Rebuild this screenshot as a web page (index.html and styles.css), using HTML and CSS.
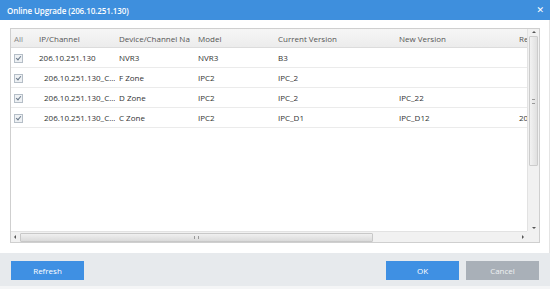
FILE: index.html
```html
<!DOCTYPE html>
<html>
<head>
<meta charset="utf-8">
<link rel="stylesheet" href="styles.css">
</head>
<body>
<div class="dialog">
  <div class="titlebar">
    <span class="title">Online Upgrade (206.10.251.130)</span>
    <span class="close">&#x2715;</span>
  </div>
  <div class="content">
    <div class="grid">
      <div class="viewport">
        <table class="list">
          <colgroup>
            <col style="width:24px"><col style="width:80px"><col style="width:79px"><col style="width:80px"><col style="width:121px"><col style="width:120px"><col style="width:60px">
          </colgroup>
          <thead>
            <tr><th>All</th><th>IP/Channel</th><th>Device/Channel Na</th><th>Model</th><th>Current Version</th><th>New Version</th><th>Re</th></tr>
          </thead>
          <tbody>
            <tr><td><span class="cb"></span></td><td>206.10.251.130</td><td>NVR3</td><td>NVR3</td><td>B3</td><td></td><td></td></tr>
            <tr><td><span class="cb"></span></td><td class="ind">206.10.251.130_C...</td><td>F Zone</td><td>IPC2</td><td>IPC_2</td><td></td><td></td></tr>
            <tr><td><span class="cb"></span></td><td class="ind">206.10.251.130_C...</td><td>D Zone</td><td>IPC2</td><td>IPC_2</td><td>IPC_22</td><td></td></tr>
            <tr><td><span class="cb"></span></td><td class="ind">206.10.251.130_C...</td><td>C Zone</td><td>IPC2</td><td>IPC_D1</td><td>IPC_D12</td><td>201</td></tr>
          </tbody>
        </table>
      </div>
      <div class="vscroll">
        <span class="arr up"></span>
        <div class="vthumb"><span class="grip-v"></span></div>
        <span class="arr down"></span>
      </div>
      <div class="hscroll">
        <span class="arr left"></span>
        <div class="hthumb"><span class="grip-h"></span></div>
        <span class="arr right"></span>
      </div>
      <div class="corner"></div>
    </div>
  </div>
  <div class="footer">
    <button class="btn primary">Refresh</button>
    <div class="spacer"></div>
    <button class="btn primary">OK</button>
    <button class="btn gray">Cancel</button>
  </div>
</div>
</body>
</html>
```

FILE: styles.css
```css
html, body {
  margin: 0;
  padding: 0;
  background: #ffffff;
}
body {
  width: 550px;
  height: 289px;
  overflow: hidden;
  font-family: "Open Sans", "DejaVu Sans", sans-serif;
  font-size: 8px;
  color: #333;
}
.dialog {
  display: flex;
  flex-direction: column;
  width: 550px;
  height: 289px;
}
.titlebar {
  height: 20px;
  background: #3e8fdd;
  display: flex;
  align-items: center;
  justify-content: space-between;
  padding: 0 6px 0 7px;
  color: #fff;
}
.title {
  font-weight: 600;
  font-size: 8px;
  letter-spacing: -0.1px;
}
.close {
  font-size: 9px;
  font-weight: 700;
  font-family: "DejaVu Sans", sans-serif;
}
.content {
  flex: 1;
  padding: 8px 10px 10px 10px;
  background: #fff;
  border-right: 1px solid #e4e4e4;
}
.grid {
  width: 530px;
  height: 215px;
  box-sizing: border-box;
  border: 1px solid #cfcfcf;
  display: grid;
  grid-template-columns: 1fr 12px;
  grid-template-rows: 1fr 11px;
}
.viewport {
  overflow: hidden;
  background: #fff;
}
.list {
  border-collapse: collapse;
  table-layout: fixed;
  width: 564px;
}
.list th {
  height: 18px;
  background: linear-gradient(#f6f6f6, #ececec);
  border-bottom: 1px solid #dcdcdc;
  font-weight: 400;
  text-align: left;
  padding: 0 0 0 4px;
  color: #555;
  white-space: nowrap;
  overflow: hidden;
}
.list th:first-child { color: #888; padding-left: 3px; }
.list td {
  height: 19px;
  border-bottom: 1px solid #ebebeb;
  padding: 0 0 0 4px;
  white-space: nowrap;
  overflow: hidden;
  color: #333;
}
.list td:first-child { padding-left: 3px; }
.list td.ind { padding-left: 9px; }
.cb {
  display: inline-block;
  width: 7px;
  height: 7px;
  border: 1px solid #b5bec7;
  background: #eef1f4;
  position: relative;
  vertical-align: middle;
}
.cb::after {
  content: "";
  position: absolute;
  left: 2px;
  top: 0px;
  width: 2px;
  height: 4px;
  border-right: 1px solid #6a7a8a;
  border-bottom: 1px solid #6a7a8a;
  transform: rotate(40deg);
}
.vscroll {
  background: #f1f1f1;
  border-left: 1px solid #e2e2e2;
  display: flex;
  flex-direction: column;
  align-items: center;
  padding: 2px 0;
  box-sizing: border-box;
}
.vthumb {
  width: 9px;
  height: 130px;
  margin-top: 3px;
  box-sizing: border-box;
  border: 1px solid #cccccc;
  border-radius: 1px;
  background: linear-gradient(90deg, #f2f2f2, #e0e0e0);
  display: flex;
  align-items: center;
  justify-content: center;
}
.grip-v {
  width: 3px;
  height: 3px;
  border-top: 1px solid #999;
  border-bottom: 1px solid #999;
}
.vscroll .down { margin-top: auto; }
.hscroll {
  background: #f1f1f1;
  border-top: 1px solid #e2e2e2;
  display: flex;
  align-items: center;
  padding: 0 3px;
  box-sizing: border-box;
}
.hthumb {
  width: 353px;
  height: 9px;
  margin-left: 4px;
  box-sizing: border-box;
  border: 1px solid #c8c8c8;
  border-radius: 1px;
  background: linear-gradient(#f0f0f0, #dadada);
  display: flex;
  align-items: center;
  justify-content: center;
}
.grip-h {
  width: 3px;
  height: 3px;
  border-left: 1px solid #999;
  border-right: 1px solid #999;
}
.hscroll .right { margin-left: auto; }
.corner { background: #f1f1f1; }
.arr {
  width: 0;
  height: 0;
  border: 2px solid transparent;
}
.up { border-bottom-color: #555; border-top-width: 0; }
.down { border-top-color: #555; border-bottom-width: 0; }
.left { border-right-color: #555; border-left-width: 0; }
.right { border-left-color: #555; border-right-width: 0; }
.footer {
  height: 33px;
  background: #e7eaed;
  border-bottom: 3px solid #f4f5f6;
  display: flex;
  align-items: center;
  padding: 0 11px;
  gap: 7px;
}
.spacer { flex: 1; }
.btn {
  width: 73px;
  height: 19px;
  border: none;
  font-family: "Open Sans", "DejaVu Sans", sans-serif;
  font-size: 8px;
  color: #fff;
  padding: 0;
  margin-top: 2px;
}
.btn.primary { background: #3f90e3; }
.btn.gray { background: #a9b0b8; color: #eef0f2; }
```
